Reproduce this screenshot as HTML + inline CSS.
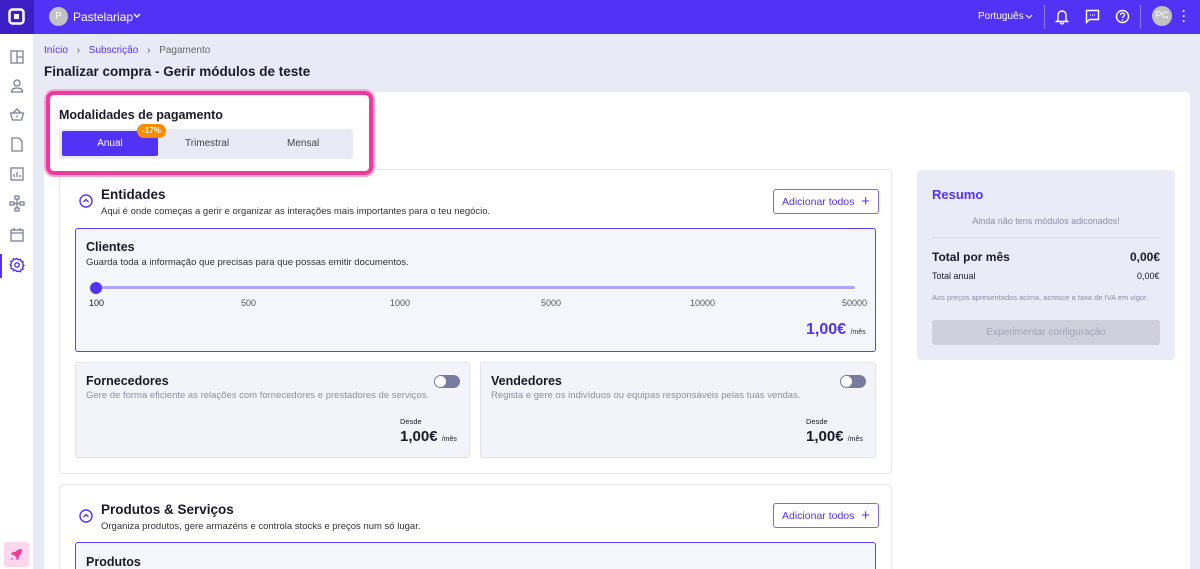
<!DOCTYPE html>
<html><head><meta charset="utf-8"><style>
*{box-sizing:border-box;margin:0;padding:0}
html{width:1200px;height:569px;overflow:hidden}
body{width:1200px;height:569px;overflow:hidden;background:#e8eaf6;font-family:"Liberation Sans",sans-serif;position:relative;color:#1a1a2a}
.a{position:absolute}
.top{left:0;top:0;width:1200px;height:34px;background:#5233f5}
.side{left:0;top:34px;width:33px;height:535px;background:#fff}
.card{background:#fff;border:1px solid #e4e6ef;border-radius:4px}
.h{font-weight:bold}
.sub{font-size:9.5px;color:#333}
.btn{border:1px solid #7b68f5;border-radius:3px;color:#5233f5;font-size:10.5px;padding:0 8px;height:25px;line-height:23px;background:#fff;white-space:nowrap}
.mod{background:#f5f5fc;border:1.5px solid #5b3ff5;border-radius:3px}
.gm{background:#f3f4f9;border:1px solid #e2e4ec;border-radius:3px}
.tog{width:26px;height:13px;border-radius:7px;background:#767b9f}
.tog:after{content:"";position:absolute;left:1px;top:1px;width:11px;height:11px;border-radius:50%;background:#fff}
.ic{stroke:#7d8094;fill:none;stroke-width:1.3}
</style></head><body>
<div class="a top"></div>
<div class="a" style="left:0;top:0;width:34px;height:34px;background:#3d1fc7"></div>
<svg class="a" style="left:8px;top:8px" width="17" height="17" viewBox="0 0 17 17"><rect x="1.5" y="1.5" width="14" height="14" rx="3" fill="none" stroke="#fff" stroke-width="2.5"/><rect x="6" y="6" width="5" height="5" fill="#fff"/></svg>
<div class="a" style="left:49px;top:7px;width:19px;height:19px;border-radius:50%;background:#c2c2c2;color:#fff;font-size:10px;text-align:center;line-height:19px">P</div>
<div class="a" style="left:73px;top:10px;color:#fff;font-size:12px">Pastelariap</div>
<svg class="a" style="left:133px;top:13px" width="8" height="6"><path d="M1 1l3 3 3-3" fill="none" stroke="#fff" stroke-width="1.3"/></svg>
<div class="a" style="left:978px;top:11px;color:#fff;font-size:10px">Português</div>
<svg class="a" style="left:1025px;top:14px" width="8" height="6"><path d="M1 1l3 3 3-3" fill="none" stroke="#fff" stroke-width="1.1"/></svg>
<div class="a" style="left:1044px;top:5px;width:1px;height:24px;background:#8c7bf8"></div>
<div class="a" style="left:1140px;top:5px;width:1px;height:24px;background:#8c7bf8"></div>
<svg class="a" style="left:1055px;top:9px" width="14" height="16" viewBox="0 0 14 16"><path d="M3 11V6a4 4 0 018 0v5l1.5 1.5h-11zM5.5 13.5a1.5 1.5 0 003 0" fill="none" stroke="#fff" stroke-width="1.4"/></svg>
<svg class="a" style="left:1085px;top:9px" width="15" height="15" viewBox="0 0 15 15"><path d="M1.5 1.5h12v9h-9l-3 3z" fill="none" stroke="#fff" stroke-width="1.4"/><path d="M5 6h1M7 6h1M9 6h1" stroke="#fff" stroke-width="1.2"/></svg>
<svg class="a" style="left:1115px;top:9px" width="15" height="15" viewBox="0 0 15 15"><circle cx="7.5" cy="7.5" r="6" fill="none" stroke="#fff" stroke-width="1.4"/><path d="M5.5 6a2 2 0 114 0c0 1.2-2 1.5-2 3" fill="none" stroke="#fff" stroke-width="1.3"/><circle cx="7.5" cy="11" r=".8" fill="#fff"/></svg>
<div class="a" style="left:1152px;top:6px;width:20px;height:20px;border-radius:50%;background:#c2c2c2;color:#fff;font-size:9.5px;text-align:center;line-height:20px">PC</div>
<div class="a" style="left:1182px;top:9px;color:#fff;font-size:12px;font-weight:bold;line-height:5px">·<br>·<br>·</div>
<div class="a side"></div>
<svg class="a" style="left:9px;top:49px" width="16" height="235" viewBox="0 0 16 235">
<g class="ic"><rect x="2" y="2" width="12" height="12"/><path d="M8 2v12M8 8h6"/>
<circle cx="8" cy="34" r="3"/><path d="M2.5 43c0-3 2.5-4 5.5-4s5.5 1 5.5 4z"/>
<path d="M1.5 64h13l-2 7h-9zM4 64l4-4 4 4M8 66.5v2"/>
<path d="M3 89h7l3 3v10H3z"/>
<rect x="2" y="119" width="12" height="12"/><path d="M5 128v-3M8 128v-5M11 128v-2"/>
<rect x="6" y="147" width="4" height="3"/><rect x="1" y="153" width="4" height="3"/><rect x="11" y="153" width="4" height="3"/><rect x="6" y="159" width="4" height="3"/><path d="M5 154.5h6M8 150v9"/>
<rect x="2" y="181" width="12" height="11"/><path d="M2 184h12M5 179v3M11 179v3"/></g>
<g stroke="#5233f5" fill="none" stroke-width="1.4"><circle cx="8" cy="216" r="2.2"/><path d="M8 209.5l1.5 1.3 2-.5.6 2 2 .7-.5 2 1.3 1.5-1.3 1.5.5 2-2 .7-.6 2-2-.5L8 222.5l-1.5-1.3-2 .5-.6-2-2-.7.5-2L1.1 216l1.3-1.5-.5-2 2-.7.6-2 2 .5z"/></g></svg>
<div class="a" style="left:0;top:254px;width:2px;height:24px;background:#5233f5"></div>
<div class="a" style="left:4px;top:542px;width:25px;height:25px;background:#fcd6ec;border-radius:3px"></div>
<svg class="a" style="left:9px;top:547px" width="15" height="15" viewBox="0 0 15 15"><path d="M13 2c-4 0-7 2-8.5 5.5l3 3C11 9 13 6 13 2z" fill="#ee3d96"/><path d="M4.5 7.5L2 8l1.5-3h3zM7.5 10.5L7 13l3-1.5v-3zM4 11c-1 0-2 1-2 2 1 0 2-1 2-2" fill="#ee3d96"/></svg>
<div class="a" style="left:44px;top:45px;font-size:10px;color:#5233f5">Início <span style="color:#555;margin:0 6px">›</span> Subscrição <span style="color:#555;margin:0 6px">›</span> <span style="color:#666">Pagamento</span></div>
<div class="a h" style="left:44px;top:64px;font-size:13.5px">Finalizar compra - Gerir módulos de teste</div>
<div class="a" style="left:44px;top:92px;width:1146px;height:490px;background:#fff;border-radius:4px"></div>

<div class="a card" style="left:59px;top:169px;width:833px;height:305px"></div>
<svg class="a" style="left:79px;top:194px" width="14" height="14"><circle cx="7" cy="7" r="6" fill="none" stroke="#5233f5" stroke-width="1.4"/><path d="M4.5 8l2.5-2.5L9.5 8" fill="none" stroke="#5233f5" stroke-width="1.4"/></svg>
<div class="a h" style="left:101px;top:187px;font-size:13.5px">Entidades</div>
<div class="a sub" style="left:101px;top:206px">Aqui é onde começas a gerir e organizar as interações mais importantes para o teu negócio.</div>
<div class="a btn" style="left:773px;top:189px">Adicionar todos <span style="font-size:15px;margin-left:4px;vertical-align:-1px">+</span></div>
<div class="a mod" style="left:75px;top:228px;width:801px;height:124px"></div>
<div class="a h" style="left:86px;top:240px;font-size:12.5px">Clientes</div>
<div class="a sub" style="left:86px;top:257px">Guarda toda a informação que precisas para que possas emitir documentos.</div>
<div class="a" style="left:95px;top:286px;width:760px;height:3px;background:#b1a3fb;border-radius:2px"></div>
<div class="a" style="left:90px;top:282px;width:12px;height:12px;border-radius:50%;background:#5233f5"></div>
<div class="a" style="left:89px;top:298px;font-size:9px;color:#222">100</div>
<div class="a" style="left:241px;top:298px;font-size:9px;color:#555">500</div>
<div class="a" style="left:390px;top:298px;font-size:9px;color:#555">1000</div>
<div class="a" style="left:541px;top:298px;font-size:9px;color:#555">5000</div>
<div class="a" style="left:690px;top:298px;font-size:9px;color:#555">10000</div>
<div class="a" style="left:842px;top:298px;font-size:9px;color:#555">50000</div>
<div class="a h" style="left:806px;top:321px;font-size:16px;color:#5233f5">1,00€ <span style="font-size:7px;color:#333;font-weight:normal">/mês</span></div>

<div class="a gm" style="left:75px;top:362px;width:395px;height:96px"></div>
<div class="a h" style="left:86px;top:374px;font-size:12.5px">Fornecedores</div>
<div class="a sub" style="left:86px;top:390px;color:#8a8ea8">Gere de forma eficiente as relações com fornecedores e prestadores de serviços.</div>
<div class="a tog" style="left:434px;top:375px"></div>
<div class="a" style="left:400px;top:417px;font-size:7.5px">Desde</div>
<div class="a h" style="left:400px;top:428px;font-size:15px">1,00€ <span style="font-size:7px;font-weight:normal">/mês</span></div>
<div class="a gm" style="left:480px;top:362px;width:396px;height:96px"></div>
<div class="a h" style="left:491px;top:374px;font-size:12.5px">Vendedores</div>
<div class="a sub" style="left:491px;top:390px;color:#8a8ea8">Regista e gere os indivíduos ou equipas responsáveis pelas tuas vendas.</div>
<div class="a tog" style="left:840px;top:375px"></div>
<div class="a" style="left:806px;top:417px;font-size:7.5px">Desde</div>
<div class="a h" style="left:806px;top:428px;font-size:15px">1,00€ <span style="font-size:7px;font-weight:normal">/mês</span></div>

<div class="a card" style="left:59px;top:484px;width:833px;height:90px"></div>
<svg class="a" style="left:79px;top:509px" width="14" height="14"><circle cx="7" cy="7" r="6" fill="none" stroke="#5233f5" stroke-width="1.4"/><path d="M4.5 8l2.5-2.5L9.5 8" fill="none" stroke="#5233f5" stroke-width="1.4"/></svg>
<div class="a h" style="left:101px;top:502px;font-size:13.5px">Produtos &amp; Serviços</div>
<div class="a sub" style="left:101px;top:521px">Organiza produtos, gere armazéns e controla stocks e preços num só lugar.</div>
<div class="a btn" style="left:773px;top:503px">Adicionar todos <span style="font-size:15px;margin-left:4px;vertical-align:-1px">+</span></div>
<div class="a mod" style="left:75px;top:542px;width:801px;height:27px;border-bottom:none;border-radius:3px 3px 0 0"></div>
<div class="a h" style="left:86px;top:555px;font-size:12.5px">Produtos</div>

<div class="a" style="left:917px;top:170px;width:258px;height:190px;background:#e9ebf7;border-radius:4px"></div>
<div class="a h" style="left:932px;top:187px;font-size:13px;color:#5233f5">Resumo</div>
<div class="a" style="left:917px;top:216px;width:258px;text-align:center;font-size:9px;color:#8a8ea8">Ainda não tens módulos adiconados!</div>
<div class="a" style="left:932px;top:237px;width:228px;height:1px;background:#d8dbea"></div>
<div class="a h" style="left:932px;top:250px;font-size:12px">Total por mês</div>
<div class="a h" style="left:1130px;top:250px;font-size:12px">0,00€</div>
<div class="a" style="left:932px;top:271px;font-size:9px">Total anual</div>
<div class="a" style="left:1137px;top:271px;font-size:9px">0,00€</div>
<div class="a" style="left:932px;top:293px;font-size:7.5px;color:#8a8ea8">Aos preços apresentados acima, acresce a taxa de IVA em vigor.</div>
<div class="a" style="left:932px;top:320px;width:228px;height:25px;background:#cfd0dc;border-radius:3px;text-align:center;line-height:25px;font-size:10px;color:#a2a4b4">Experimentar configuração</div>

<div class="a" style="left:46px;top:91px;width:327px;height:84px;border:4px solid #f0399c;border-radius:8px;box-shadow:0 0 0 2px #f7a8d4;background:#fff;z-index:2"></div>
<div class="a h" style="left:59px;top:108px;font-size:12.5px;z-index:3">Modalidades de pagamento</div>
<div class="a" style="left:59px;top:129px;width:294px;height:30px;background:#e9eaf6;border-radius:3px;z-index:3"></div>
<div class="a" style="left:62px;top:131px;width:96px;height:25px;background:#5233f5;border-radius:2px;color:#fff;font-size:10px;text-align:center;line-height:25px;z-index:3">Anual</div>
<div class="a" style="left:185px;top:138px;font-size:10px;color:#444;z-index:3">Trimestral</div>
<div class="a" style="left:287px;top:138px;font-size:10px;color:#444;z-index:3">Mensal</div>
<div class="a" style="left:137px;top:124px;width:29px;height:14px;background:#fb8c00;border-radius:7px;color:#fff;font-size:8px;font-weight:bold;text-align:center;line-height:14px;z-index:4">-17%</div>
</body></html>
